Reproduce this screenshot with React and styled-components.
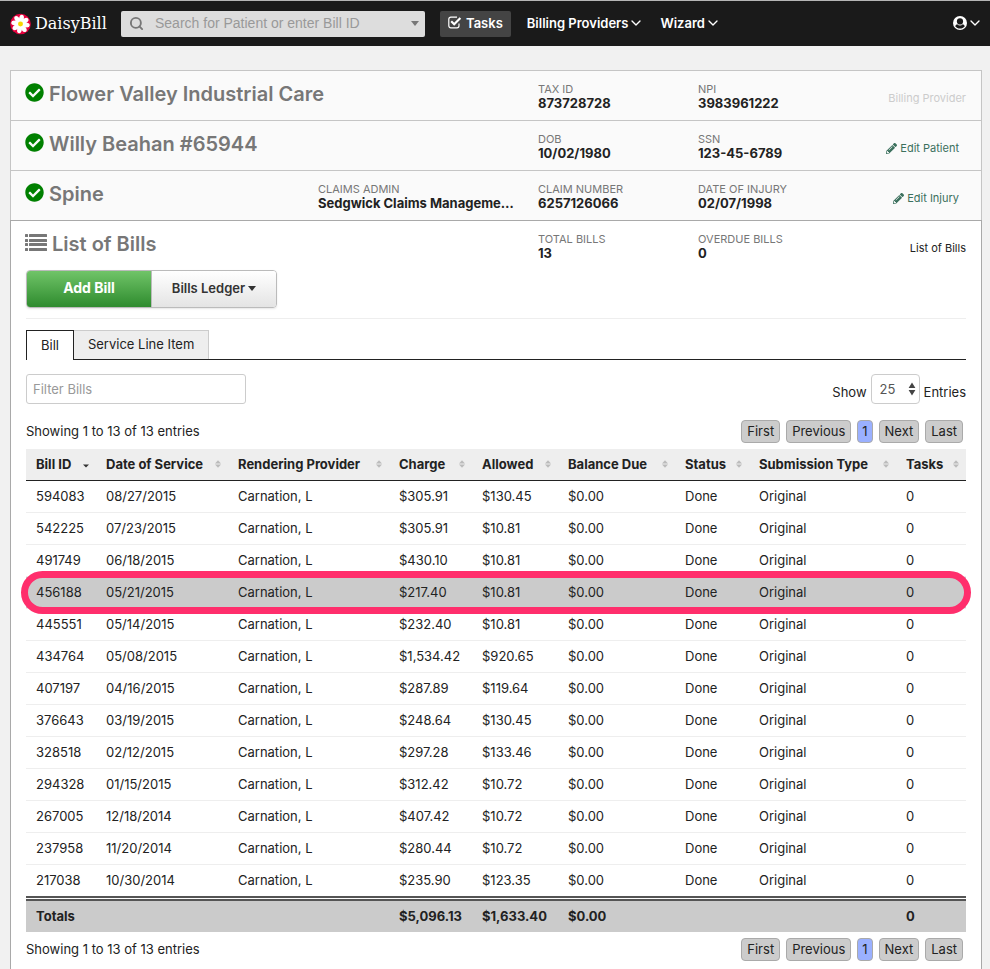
import React, { useState } from 'react';
import styled, { createGlobalStyle } from 'styled-components';
import { FaCheckCircle, FaPencilAlt } from 'react-icons/fa';
import { ChevronDown, Search } from 'lucide-react';

const GlobalStyle = createGlobalStyle`
  * {
    box-sizing: border-box;
  }

  body {
    margin: 0;
    background: #f1f1f1;
    color: #222;
    font-family: Inter, "Liberation Sans", sans-serif;
    font-size: 13px;
    line-height: 20px;
  }

  button, input, select {
    font: inherit;
    color: inherit;
  }
`

/* ---------- top bar ---------- */

const TopBar = styled.header`
  display: flex;
  align-items: center;
  height: 46px;
  padding: 0 7px 0 10px;
  border-top: 1px solid #b5b5b5;
  background: #1a1a1a;
  color: #fff;
`

const Brand = styled.a`
  display: flex;
  align-items: center;
  gap: 4px;
  width: 111px;
  color: #fff;
  font-family: "DejaVu Serif", serif;
  font-size: 16px;
  text-decoration: none;
`

const SearchBox = styled.div`
  display: flex;
  align-items: center;
  width: 304px;
  height: 26px;
  padding: 0 6px 0 8px;
  border-radius: 2px;
  background: #ddd;
  color: #777;
`

const SearchInput = styled.input`
  flex: 1;
  min-width: 0;
  height: 26px;
  padding: 0 0 2px 11px;
  border: none;
  background: none;
  font-family: "Liberation Sans", sans-serif;
  font-size: 14px;
  &::placeholder {
    color: #999;
  }
`

const Caret = styled.span`
  display: inline-block;
  border: 4px solid transparent;
  border-top: 5px solid currentColor;
  border-bottom: none;
`

const NavItems = styled.nav`
  display: flex;
  flex: 1;
  align-items: center;
  gap: 16px;
  margin-left: 15px;
`

const NavButton = styled.button`
  display: flex;
  align-items: center;
  gap: ${props => props.$active ? '4px' : '0'};
  height: 26px;
  margin-left: ${props => props.$push ? 'auto' : '0'};
  padding: 0 ${props => props.$active ? '8px' : '0'} 2px;
  border: none;
  border-radius: 2px;
  background: ${props => props.$active ? '#444' : 'none'};
  color: #fff;
  font-weight: 600;
  white-space: nowrap;
`

/* ---------- panel ---------- */

const Panel = styled.main`
  margin: 24px 8px 0 10px;
`

const Summary = styled.section`
  border: 1px solid #c5c5c5;
  border-bottom: none;
  background: #fafafa;
`

const Bills = styled.section`
  padding-bottom: 8px;
  border: 1px solid #a9a9a9;
  border-bottom: none;
  background: #fff;
`

const HeadRow = styled.div`
  display: grid;
  grid-template-columns: minmax(0, 1fr) 220px 160px 160px 108px;
  height: ${props => props.$line ? '50px' : '49px'};
  padding: 0 15px 0 14px;
  border-bottom: ${props => props.$line ? '1px solid #c5c5c5' : 'none'};
`

const Title = styled.h2`
  display: flex;
  align-items: center;
  gap: 5px;
  height: 24px;
  margin: 11px 0 0;
  color: #777;
  font-size: 20px;
  font-weight: 600;
  white-space: nowrap;
  svg {
    flex: none;
    margin-bottom: 4px;
  }
`

const Fact = styled.dl`
  grid-column: ${props => props.$col};
  margin: 12px 0 0;
  dt {
    color: #777;
    font-size: 11px;
    line-height: 12px;
  }
  dd {
    margin: 0;
    padding-right: 24px;
    overflow: hidden;
    font-weight: 700;
    line-height: 16px;
    text-overflow: ellipsis;
    white-space: nowrap;
  }
`

const Aside = styled.div`
  grid-column: 5;
  padding-top: 17px;
  color: ${props => props.$muted ? '#ccc' : '#222'};
  font-size: 11px;
  text-align: right;
`

const EditLink = styled.a`
  display: inline-flex;
  align-items: center;
  gap: 3px;
  margin-right: 7px;
  color: #3b705d;
  text-decoration: none;
`

const BillsBody = styled.div`
  padding: 0 15px;
`

const ButtonGroup = styled.div`
  display: flex;
  width: 251px;
  height: 38px;
  border: 1px solid #bbb;
  border-radius: 4px;
  box-shadow: 0 1px 2px rgba(0, 0, 0, 0.1);
  overflow: hidden;
`

const GroupButton = styled.button`
  display: flex;
  flex: 1;
  align-items: center;
  justify-content: center;
  gap: 3px;
  padding: 0 0 2px;
  border: none;
  border-left: ${props => props.$primary ? 'none' : '1px solid #bbb'};
  background: ${props => props.$primary
    ? 'linear-gradient(#70c468, #2e8b2e)'
    : 'linear-gradient(#fff, #e4e4e4)'};
  color: ${props => props.$primary ? '#fff' : '#333'};
  font-size: ${props => props.$primary ? '14px' : '13px'};
  font-weight: ${props => props.$primary ? 700 : 600};
`

const Divider = styled.hr`
  height: 1px;
  margin: 10px 0 11px;
  border: none;
  background: #eee;
`

const Tabs = styled.div`
  display: flex;
  border-bottom: 1px solid #222;
`

const Tab = styled.button`
  height: ${props => props.$active ? '30px' : '29px'};
  margin-bottom: ${props => props.$active ? '-1px' : '0'};
  padding: 0 14px 2px;
  border: 1px solid ${props => props.$active ? '#222' : '#ccc'};
  border-bottom: none;
  border-left-width: ${props => props.$active ? '1px' : '0'};
  background: ${props => props.$active ? '#fff' : '#eee'};
`

const Controls = styled.div`
  display: flex;
  justify-content: space-between;
  margin: 14px 0 16px;
`

const FilterInput = styled.input`
  width: 220px;
  height: 30px;
  padding: 0 6px;
  border: 1px solid #ccc;
  border-radius: 3px;
  &::placeholder {
    color: #999;
  }
`

const ShowEntries = styled.label`
  display: flex;
  align-items: flex-end;
  gap: 4px;
  line-height: 24px;
`

const SelectWrap = styled.span`
  position: relative;
  display: flex;
  svg {
    position: absolute;
    top: 8px;
    right: 4px;
    pointer-events: none;
  }
`

const Select = styled.select`
  width: 49px;
  height: 30px;
  padding: 0 8px;
  border: 1px solid #ccc;
  border-radius: 4px;
  background: #fff;
  color: #555;
  appearance: none;
`

const InfoBar = styled.div`
  display: flex;
  align-items: center;
  justify-content: space-between;
  height: 23px;
  margin: 6px 0;
`

const InfoText = styled.span`
  padding-bottom: 2px;
`

const Pages = styled.div`
  display: flex;
  gap: 6px;
  padding-right: 3px;
`

const PageButton = styled.button`
  height: 23px;
  padding: 0 ${props => props.$current ? '4px' : '5px'};
  border: 1px solid #aaa;
  border-radius: 4px;
  background: ${props => props.$current ? '#9ab0ff' : '#ccc'};
  line-height: 19px;
`

/* ---------- table ---------- */

const Table = styled.table`
  width: 100%;
  border-spacing: 0;
  table-layout: fixed;
  th, td {
    height: 32px;
    padding: 0 10px 2px;
    text-align: left;
    white-space: nowrap;
  }
  thead th {
    border-bottom: 1px solid #222;
    background: #eee;
  }
  tbody td {
    border-bottom: 1px solid #eee;
  }
  tbody tr:last-child td {
    height: 31px;
    border-bottom: none;
  }
  tfoot th, tfoot td {
    height: 36px;
    border-top: 5px double #555;
    background: #cbcbcb;
    background-clip: padding-box;
    font-weight: 700;
  }
`

const SortButton = styled.button`
  display: flex;
  align-items: center;
  justify-content: space-between;
  width: 100%;
  padding: 0;
  border: none;
  background: none;
  font-weight: 700;
  svg {
    flex: none;
    margin-right: -4px;
  }
`

// the ring spills a little over the rows around the marked one
const BillRow = styled.tr`
  ${props => props.$marked && `
    position: relative;
    background: #cbcbcb;
    &::after {
      content: '';
      position: absolute;
      z-index: 1;
      top: -6px;
      right: -5px;
      bottom: -5px;
      left: -5px;
      border: 7px solid #ff2e6c;
      border-radius: 22px;
      pointer-events: none;
    }
  `}
`

/* ---------- icons ---------- */

const Daisy = () => (
  <svg width="21" height="22" viewBox="-11 -11 22 22" aria-hidden="true">
    <circle r="10.8" fill="#e5003d" />
    {[0, 45, 90, 135, 180, 225, 270, 315].map(angle => (
      <ellipse key={angle} cy="-5.8" rx="2.5" ry="4" fill="#fff" transform={`rotate(${angle + 10})`} />
    ))}
    <circle r="3.4" fill="#fff" />
    <circle r="2.6" fill="#f8d800" />
  </svg>
)

const TaskCheck = () => (
  <svg width="14" height="13" viewBox="0 0 14 13" fill="none" stroke="#fff" aria-hidden="true">
    <path d="M11 7.5v2.3a2 2 0 0 1-2 2H2.8a2 2 0 0 1-2-2V3.2a2 2 0 0 1 2-2H9" strokeWidth="1.2" />
    <path d="M3.2 5.2 6.2 8.2 12.4 2" strokeWidth="2.2" />
  </svg>
)

const Account = () => (
  <svg width="14" height="14" viewBox="0 0 14 14" aria-hidden="true">
    <circle cx="7" cy="7" r="7" fill="#fff" />
    <circle cx="7" cy="5.4" r="3.1" fill="#1a1a1a" />
    <path d="M2.2 10.2C2.6 9 3.4 8.4 4.2 8.2 5.8 9.8 8.2 9.8 9.8 8.2 10.6 8.4 11.4 9 11.8 10.2 9.4 13.4 4.6 13.4 2.2 10.2z" fill="#1a1a1a" />
  </svg>
)

const ListIcon = () => (
  <svg width="22" height="17" viewBox="0 0 22 17" fill="#777" aria-hidden="true">
    {[0, 5, 9, 14].map(y => (
      <React.Fragment key={y}>
        <rect y={y} width="3" height="3" rx="0.5" />
        <rect x="4" y={y} width="18" height="3" rx="0.5" />
      </React.Fragment>
    ))}
  </svg>
)

const SortIcon = ({ sorted }) => (
  <svg width="8" height="8" viewBox="0 0 8 8" fill={sorted ? '#333' : '#bbb'} aria-hidden="true">
    {!sorted && <path d="M1 3.4 4 0.2 7 3.4z" />}
    {sorted ? <path d="M1 4.4h6L4 7.6z" /> : <path d="M1 4.6h6L4 7.8z" />}
  </svg>
)

const Stepper = () => (
  <svg width="8" height="14" viewBox="0 0 8 14" fill="#444" aria-hidden="true">
    <path d="M0.6 6 4 0.4 7.4 6zM0.6 8h6.8L4 13.6z" />
  </svg>
)

/* ---------- data ---------- */

const columns = [
  ['Bill ID', 70],
  ['Date of Service', 132],
  ['Rendering Provider', 161],
  ['Charge', 83],
  ['Allowed', 86],
  ['Balance Due', 117],
  ['Status', 74],
  ['Submission Type', 147],
  ['Tasks', 70],
]

const bills = [
  ['594083', '08/27/2015', '$305.91', '$130.45'],
  ['542225', '07/23/2015', '$305.91', '$10.81'],
  ['491749', '06/18/2015', '$430.10', '$10.81'],
  ['456188', '05/21/2015', '$217.40', '$10.81'],
  ['445551', '05/14/2015', '$232.40', '$10.81'],
  ['434764', '05/08/2015', '$1,534.42', '$920.65'],
  ['407197', '04/16/2015', '$287.89', '$119.64'],
  ['376643', '03/19/2015', '$248.64', '$130.45'],
  ['328518', '02/12/2015', '$297.28', '$133.46'],
  ['294328', '01/15/2015', '$312.42', '$10.72'],
  ['267005', '12/18/2014', '$407.42', '$10.72'],
  ['237958', '11/20/2014', '$280.44', '$10.72'],
  ['217038', '10/30/2014', '$235.90', '$123.35'],
]

const FactItem = ({ col, label, value }) => (
  <Fact $col={col}>
    <dt>{label}</dt>
    <dd>{value}</dd>
  </Fact>
)

const Pagination = () => (
  <InfoBar>
    <InfoText>Showing 1 to 13 of 13 entries</InfoText>
    <Pages>
      {['First', 'Previous', '1', 'Next', 'Last'].map(label => (
        <PageButton key={label} $current={label === '1'}>{label}</PageButton>
      ))}
    </Pages>
  </InfoBar>
)

const BillsTable = () => (
  <Table>
    <colgroup>
      {columns.map(([name, width]) => <col key={name} width={width} />)}
    </colgroup>
    <thead>
      <tr>
        {columns.map(([name], i) => (
          <th key={name} scope="col" aria-sort={i === 0 ? 'descending' : 'none'}>
            <SortButton>{name}<SortIcon sorted={i === 0} /></SortButton>
          </th>
        ))}
      </tr>
    </thead>
    <tbody>
      {bills.map(([id, date, charge, allowed]) => (
        <BillRow key={id} $marked={id === '456188'}>
          <td>{id}</td>
          <td>{date}</td>
          <td>Carnation, L</td>
          <td>{charge}</td>
          <td>{allowed}</td>
          <td>$0.00</td>
          <td>Done</td>
          <td>Original</td>
          <td>0</td>
        </BillRow>
      ))}
    </tbody>
    <tfoot>
      <tr>
        <th scope="row">Totals</th>
        <td />
        <td />
        <td>$5,096.13</td>
        <td>$1,633.40</td>
        <td>$0.00</td>
        <td />
        <td />
        <td>0</td>
      </tr>
    </tfoot>
  </Table>
)

const App = () => {
  const [tab, setTab] = useState('Bill')
  const [filter, setFilter] = useState('')

  return (
    <>
      <GlobalStyle />
      <TopBar>
        <Brand href="#"><Daisy />DaisyBill</Brand>
        <SearchBox>
          <Search size={15} strokeWidth={3} />
          <SearchInput aria-label="Search" placeholder="Search for Patient or enter Bill ID" />
          <Caret />
        </SearchBox>
        <NavItems>
          <NavButton $active><TaskCheck />Tasks</NavButton>
          <NavButton>Billing Providers<ChevronDown size={16} /></NavButton>
          <NavButton>Wizard<ChevronDown size={16} /></NavButton>
          <NavButton $push aria-label="Account"><Account /><ChevronDown size={16} /></NavButton>
        </NavItems>
      </TopBar>

      <Panel>
        <Summary>
          <HeadRow $line>
            <Title><FaCheckCircle size={19} color="#008000" />Flower Valley Industrial Care</Title>
            <FactItem col={3} label="TAX ID" value="873728728" />
            <FactItem col={4} label="NPI" value="3983961222" />
            <Aside $muted>Billing Provider</Aside>
          </HeadRow>
          <HeadRow $line>
            <Title><FaCheckCircle size={19} color="#008000" />Willy Beahan #65944</Title>
            <FactItem col={3} label="DOB" value="10/02/1980" />
            <FactItem col={4} label="SSN" value="123-45-6789" />
            <Aside><EditLink href="#"><FaPencilAlt size={11} />Edit Patient</EditLink></Aside>
          </HeadRow>
          <HeadRow>
            <Title><FaCheckCircle size={19} color="#008000" />Spine</Title>
            <FactItem col={2} label="CLAIMS ADMIN" value="Sedgwick Claims Management Services" />
            <FactItem col={3} label="CLAIM NUMBER" value="6257126066" />
            <FactItem col={4} label="DATE OF INJURY" value="02/07/1998" />
            <Aside><EditLink href="#"><FaPencilAlt size={11} />Edit Injury</EditLink></Aside>
          </HeadRow>
        </Summary>

        <Bills>
          <HeadRow>
            <Title><ListIcon />List of Bills</Title>
            <FactItem col={3} label="TOTAL BILLS" value="13" />
            <FactItem col={4} label="OVERDUE BILLS" value="0" />
            <Aside>List of Bills</Aside>
          </HeadRow>
          <BillsBody>
            <ButtonGroup>
              <GroupButton $primary>Add Bill</GroupButton>
              <GroupButton>Bills Ledger<Caret /></GroupButton>
            </ButtonGroup>
            <Divider />
            <Tabs role="tablist">
              {['Bill', 'Service Line Item'].map(name => (
                <Tab
                  key={name}
                  role="tab"
                  aria-selected={tab === name}
                  $active={tab === name}
                  onClick={() => setTab(name)}
                >
                  {name}
                </Tab>
              ))}
            </Tabs>
            <Controls>
              <FilterInput
                aria-label="Filter Bills"
                placeholder="Filter Bills"
                value={filter}
                onChange={e => setFilter(e.target.value)}
              />
              <ShowEntries>
                Show
                <SelectWrap>
                  <Select defaultValue="25">
                    <option>10</option>
                    <option>25</option>
                    <option>50</option>
                  </Select>
                  <Stepper />
                </SelectWrap>
                Entries
              </ShowEntries>
            </Controls>
            <Pagination />
            <BillsTable />
            <Pagination />
          </BillsBody>
        </Bills>
      </Panel>
    </>
  )
}

export default App;
